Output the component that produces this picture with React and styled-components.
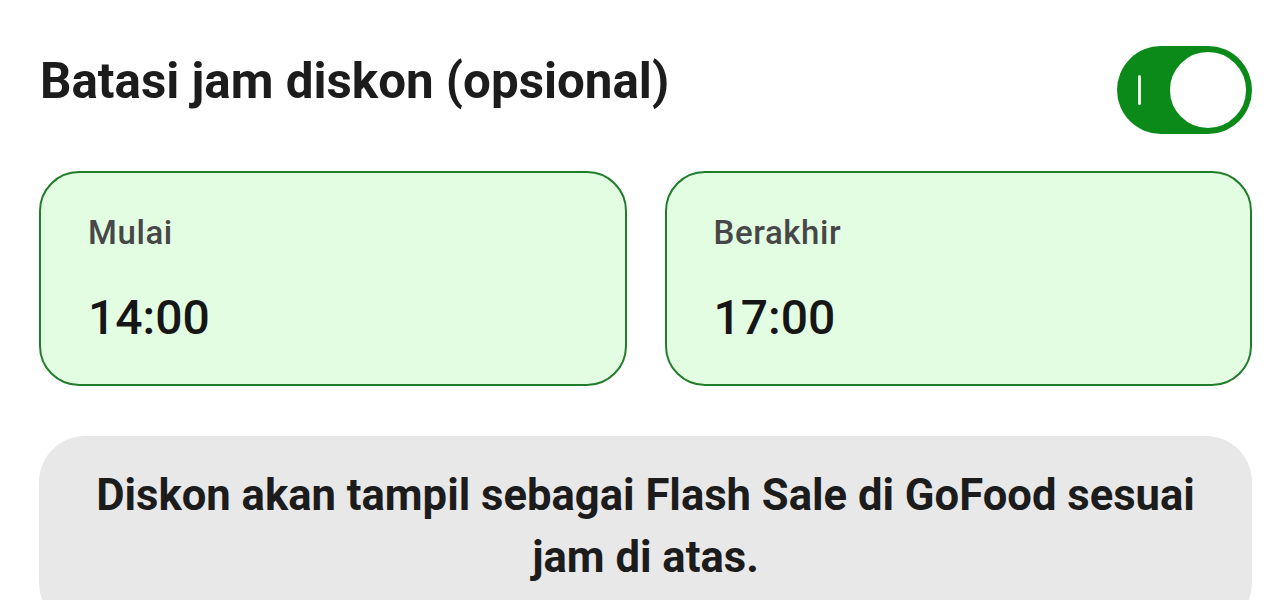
import React, { useState } from 'react'
import styled, { createGlobalStyle } from 'styled-components'

const GlobalStyle = createGlobalStyle`
  body {
    margin: 0;
    background: #ffffff;
    font-family: Roboto, "Noto Sans", sans-serif;
  }
`

const Page = styled.div`
  display: flex;
  flex-direction: column;
  padding: 46px 36px 0 39px;
  height: 600px;
  box-sizing: border-box;
  overflow: hidden;
`

const Header = styled.div`
  display: flex;
  align-items: flex-start;
  justify-content: space-between;
  height: 88px;
`

const Title = styled.h2`
  margin: 6px 0 0 1px;
  font-size: 49.3px;
  font-weight: 700;
  color: #1c1c1c;
`

const Track = styled.button`
  position: relative;
  width: 135px;
  height: 88px;
  border: none;
  border-radius: 44px;
  padding: 0;
  background: ${p => (p.on ? '#0b8a1a' : '#c8c8c8')};
  cursor: pointer;
`

const Mark = styled.span`
  position: absolute;
  left: 21px;
  top: 29px;
  width: 3px;
  height: 30px;
  border-radius: 2px;
  background: #e6ffe6;
`

const Knob = styled.span`
  position: absolute;
  top: 4px;
  left: ${p => (p.on ? '51px' : '4px')};
  width: 80px;
  height: 80px;
  border-radius: 50%;
  background: #ffffff;
  box-sizing: border-box;
  border: 2px solid #0b8a1a;
`

const TimeRow = styled.div`
  display: grid;
  grid-template-columns: 1fr 1fr;
  gap: 38px;
  margin-top: 37px;
`

const TimeCard = styled.div`
  display: flex;
  flex-direction: column;
  align-items: flex-start;
  height: 215px;
  box-sizing: border-box;
  padding: 40px 48px 0 47px;
  border: 2.5px solid #207d2a;
  border-radius: 40px;
  background: #e2fde2;
`

const Label = styled.span`
  font-size: 33px;
  font-weight: 500;
  letter-spacing: 0.6px;
  color: #474747;
`

const Time = styled.span`
  margin-top: 37px;
  font-size: 48px;
  font-weight: 500;
  color: #161616;
`

const Note = styled.div`
  margin-top: 50px;
  padding: 29px 36px 40px;
  border-radius: 46px;
  background: #e8e8e8;
  text-align: center;
  font-size: 43.6px;
  font-weight: 700;
  line-height: 62px;
  color: #1c1c1c;
`

export default function App() {
  const [on, setOn] = useState(true)

  return (
    <Page>
      <GlobalStyle />
      <Header>
        <Title>Batasi jam diskon (opsional)</Title>
        <Track on={on} onClick={() => setOn(!on)}>
          {on && <Mark />}
          <Knob on={on} />
        </Track>
      </Header>
      <TimeRow>
        <TimeCard>
          <Label>Mulai</Label>
          <Time>14:00</Time>
        </TimeCard>
        <TimeCard>
          <Label>Berakhir</Label>
          <Time>17:00</Time>
        </TimeCard>
      </TimeRow>
      <Note>
        Diskon akan tampil sebagai Flash Sale di GoFood sesuai jam di atas.
      </Note>
    </Page>
  )
}
